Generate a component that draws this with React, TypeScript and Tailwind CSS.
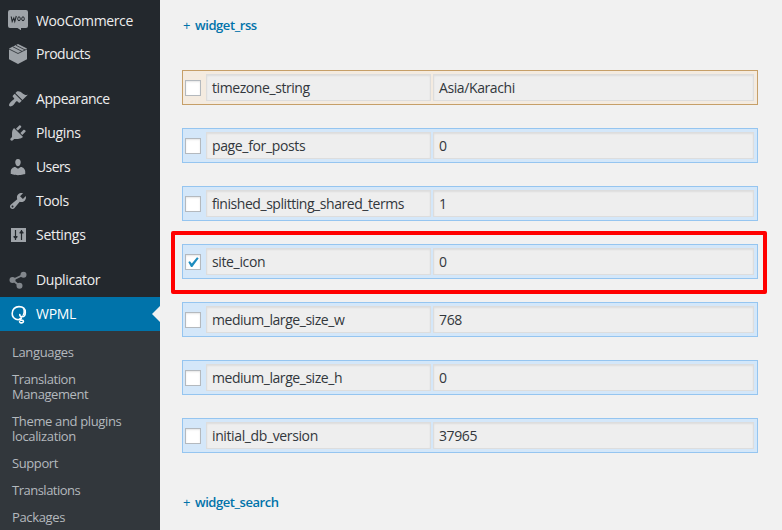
import type { ReactNode } from 'react';

function Icon({ children, className = '' }: { children: ReactNode; className?: string }) {
  return (
    <svg viewBox="0 0 20 20" className={`ml-2 mr-2 h-5 w-5 shrink-0 fill-[#9ea3a8] ${className}`}>
      {children}
    </svg>
  );
}

const icons = {
  woo: (
    <Icon>
      <path d="M2 0h16q2 0 2 2v14q0 2-2 2h-5v2.300L9.500 18H2q-2 0-2-2V2q0-2 2-2z" />
      <path d="M3.200 6.500l1 5 1.600-3.500 1 3.500L8.300 6" fill="none" stroke="#23282d" strokeWidth="1.100" />
      <ellipse cx="11" cy="8.800" rx="1.300" ry="2" fill="none" stroke="#23282d" />
      <ellipse cx="15" cy="8.800" rx="1.300" ry="2" fill="none" stroke="#23282d" />
    </Icon>
  ),
  box: (
    <Icon>
      <path d="M10 0l9 4.600v10.600L10 20l-9-4.800V4.600z" />
      <path d="M1 5l9 4.500L19 5M5 2.800l9 4.600M8 1.300l9 4.600" fill="none" stroke="#23282d" strokeWidth=".8" />
    </Icon>
  ),
  brush: (
    <Icon>
      <path d="M14.480 11.060L7.410 3.990l1.500-1.500c.5-.56 2.300-.47 3.510.32 1.210.8 1.430 1.280 2.910 2.100 1.180.64 2.450 1.260 4.450.85zm-.71.71L6.700 4.700 4.930 6.470c-.39.39-.39 1.020 0 1.410l1.060 1.060c.39.39.39 1.030 0 1.420-.6.6-1.430 1.110-2.210 1.690-.35.26-.7.53-1.010.84C1.430 14.230.4 16.080 1.400 17.070c.99 1 2.840-.03 4.180-1.360.31-.31.58-.66.85-1.020.57-.78 1.080-1.610 1.690-2.210.39-.39 1.020-.39 1.410 0l1.060 1.060c.39.39 1.020.39 1.410 0z" />
    </Icon>
  ),
  plug: (
    <Icon>
      <path d="M13.110 4.360L9.870 7.600 8 5.730l3.240-3.240c.35-.34 1.050-.2 1.560.32.52.51.66 1.210.31 1.550zm-8 1.770l.91-1.120 9.010 9.010-1.190.84c-.71.71-2.630 1.160-3.820 1.160H6.140L4.900 17.260c-.59.59-1.540.59-2.120 0-.59-.58-.59-1.530 0-2.120l1.240-1.240v-3.880c0-1.130.4-3.190 1.090-3.890zm7.260 3.970l3.240-3.240c.34-.35 1.040-.21 1.550.31.52.51.66 1.210.31 1.550l-3.240 3.250z" />
    </Icon>
  ),
  user: (
    <Icon>
      <path d="M10 9.250c-2.270 0-2.730-3.440-2.730-3.440C7 4.020 7.820 2 9.970 2c2.160 0 2.980 2.020 2.710 3.810 0 0-.41 3.440-2.680 3.440zm0 2.570L12.720 10c2.390 0 4.520 2.330 4.520 4.530v2.490s-3.650 1.130-7.240 1.130c-3.650 0-7.240-1.130-7.240-1.130v-2.490c0-2.250 1.940-4.480 4.470-4.480z" />
    </Icon>
  ),
  wrench: (
    <Icon>
      <path d="M16.680 9.770c-1.340 1.340-3.300 1.670-4.950.99l-5.410 6.520c-.99.99-2.590.99-3.580 0s-.99-2.590 0-3.570l6.520-5.420c-.68-1.650-.35-3.610.99-4.950 1.280-1.280 3.120-1.620 4.720-1.060l-2.890 2.890 2.820 2.820 2.860-2.870c.53 1.580.18 3.390-1.080 4.650zM3.810 16.210c.4.39 1.040.39 1.430 0 .4-.4.4-1.040 0-1.430-.39-.4-1.030-.4-1.430 0-.39.39-.39 1.030 0 1.430z" />
    </Icon>
  ),
  sliders: (
    <Icon>
      <path d="M3 3h15v14H3z" />
      <path d="M7.500 5v10M13.500 5v10" stroke="#23282d" strokeWidth="1.200" />
      <path d="M5.500 11h4v1.200L7.500 14l-2-1.800zM11.500 8.500h4V7.300l-2-1.800-2 1.800z" fill="#23282d" />
    </Icon>
  ),
  share: (
    <Icon className="!fill-[#82878c]">
      <path d="M15.500 4.800L4.500 10l7 5.700" fill="none" stroke="#82878c" strokeWidth="1.800" />
      <circle cx="15.500" cy="4.800" r="3" />
      <circle cx="4.500" cy="10" r="3" />
      <circle cx="11.500" cy="15.700" r="3" />
    </Icon>
  ),
  wpml: (
    <Icon className="!fill-none">
      <path
        d="M13.300 14.400C10 17 4.200 14.800 4.200 9.500 4.200 5 7.300 2.600 11 2.600c4 0 6.300 2.500 6.300 5.900 0 2.700-1.500 4.300-3.300 4.300-1.500 0-2.300-1-2.200-2.200M13.300 14.400c-2.500-.4-2 2.200.3 1.800 2.200-.3 2.500 2.500.3 2.700-1.100.1-1.900-.4-2.300-1.100"
        stroke="white"
        strokeWidth="1.600"
        strokeLinecap="round"
      />
      <path d="M15 4.500c2.800 1.500 2.800 7-1 7.500 1.600-2 1.800-5 1-7.500z" fill="white" />
    </Icon>
  ),
};

function MenuItem({ icon, label, active, tracking }: { icon: ReactNode; label: string; active?: boolean; tracking: string }) {
  return (
    <div className={`relative flex h-[34px] shrink-0 items-center text-[14px] ${active ? 'bg-[#0073aa] text-white' : 'text-[#eeeeee]'}`}>
      {icon}
      <span className={tracking}>{label}</span>
      {active && <span className="absolute right-0 top-[9px] border-y-8 border-r-8 border-y-transparent border-r-[#f1f1f1]" />}
    </div>
  );
}

function SubItem({ children, tracking }: { children: ReactNode; tracking: string }) {
  return <div className={`py-[6px] pl-3 text-[13px] leading-[15px] ${tracking}`}>{children}</div>;
}

function Row({ name, value, checked, warm, nameTracking, valueTracking = '' }: {
  name: string; value: string; checked?: boolean; warm?: boolean; nameTracking: string; valueTracking?: string;
}) {
  const field = 'flex h-[27px] items-center border border-[#dddddd] bg-[#eeeeee] pl-[5px] shadow-[inset_0_1px_2px_rgba(0,0,0,0.07)]';
  return (
    <div className={`flex h-[35px] w-[576px] items-center border pl-[2px] text-[14px] text-[#32373c] ${warm ? 'border-[#c69f68] bg-[#f4ebe0]' : 'border-[#95c5f0] bg-[#d4e7f9]'}`}>
      <span className="flex h-4 w-4 shrink-0 items-center justify-center border border-[#b4b9be] bg-white shadow-[inset_0_1px_2px_rgba(0,0,0,0.1)]">
        {checked && (
          <svg viewBox="0 0 14 14" className="h-[14px] w-[14px] shrink-0">
            <path d="M2.300 7L3.900 6.200 5.800 8.500 11 2.300 12.700 3.200 6.300 12H5z" fill="#1e8cbe" />
          </svg>
        )}
      </span>
      <span className={`${field} ml-[5px] w-[225px] ${nameTracking}`}>{name}</span>
      <span className={`${field} ml-[2px] w-[321px] ${valueTracking}`}>{value}</span>
    </div>
  );
}

function GroupLink({ name, tracking }: { name: string; tracking: string }) {
  return (
    <div className="flex h-5 items-center gap-[5px] pl-px text-[13px] text-[#0073aa]">
      <span className="w-[7px] text-center">+</span>
      <span className={`font-semibold ${tracking}`}>{name}</span>
    </div>
  );
}

export default function App() {
  return (
    <div className="flex h-[530px] w-[782px] overflow-hidden bg-[#f1f1f1] font-['Open_Sans','Noto_Sans',sans-serif]">
      <aside className="flex w-40 shrink-0 flex-col bg-[#23282d] pt-[3px]">
        <MenuItem icon={icons.woo} label="WooCommerce" tracking="tracking-[-0.38px]" />
        <MenuItem icon={icons.box} label="Products" tracking="tracking-[-0.5px] pb-px" />
        <div className="h-[11px] shrink-0" />
        <MenuItem icon={icons.brush} label="Appearance" tracking="tracking-[-0.45px] pb-px" />
        <MenuItem icon={icons.plug} label="Plugins" tracking="tracking-[-0.35px] pb-px" />
        <MenuItem icon={icons.user} label="Users" tracking="tracking-[-0.6px] pb-px" />
        <MenuItem icon={icons.wrench} label="Tools" tracking="tracking-[-0.4px] pb-px" />
        <MenuItem icon={icons.sliders} label="Settings" tracking="tracking-[-0.3px] pb-px" />
        <div className="h-[11px] shrink-0" />
        <MenuItem icon={icons.share} label="Duplicator" tracking="tracking-[-0.4px] pb-px" />
        <MenuItem icon={icons.wpml} label="WPML" active tracking="tracking-[-0.3px] pb-px" />
        <div className="min-h-0 flex-1 overflow-hidden bg-[#32373c] pt-2 text-[#b4b9be]">
          <SubItem tracking="tracking-[-0.35px]">Languages</SubItem>
          <SubItem tracking="tracking-[-0.42px]">Translation<br />Management</SubItem>
          <SubItem tracking="tracking-[-0.35px]">Theme and plugins<br />localization</SubItem>
          <SubItem tracking="tracking-[-0.4px]">Support</SubItem>
          <SubItem tracking="tracking-[-0.5px]">Translations</SubItem>
          <SubItem tracking="tracking-[-0.35px]">Packages</SubItem>
        </div>
      </aside>
      <main className="relative flex-1 pl-[22px] pt-[16px]">
        <GroupLink name="widget_rss" tracking="tracking-[-0.42px]" />
        <div className="mt-[34px] flex flex-col gap-[23px]">
          <Row name="timezone_string" value="Asia/Karachi" warm nameTracking="tracking-[-0.42px]" valueTracking="tracking-[-0.4px]" />
          <Row name="page_for_posts" value="0" nameTracking="tracking-[-0.36px]" />
          <Row name="finished_splitting_shared_terms" value="1" nameTracking="tracking-[-0.45px]" />
          <Row name="site_icon" value="0" checked nameTracking="tracking-[-0.36px]" />
          <Row name="medium_large_size_w" value="768" nameTracking="tracking-[-0.45px]" valueTracking="tracking-[-0.35px]" />
          <Row name="medium_large_size_h" value="0" nameTracking="tracking-[-0.45px]" />
          <Row name="initial_db_version" value="37965" nameTracking="tracking-[-0.38px]" valueTracking="tracking-[-0.4px]" />
        </div>
        <div className="mt-[40px]">
          <GroupLink name="widget_search" tracking="tracking-[-0.45px]" />
        </div>
        <div className="absolute left-[11px] top-[231px] h-[63px] w-[596px] rounded-[2px] border-4 border-[#ff0000]" />
      </main>
    </div>
  );
}
